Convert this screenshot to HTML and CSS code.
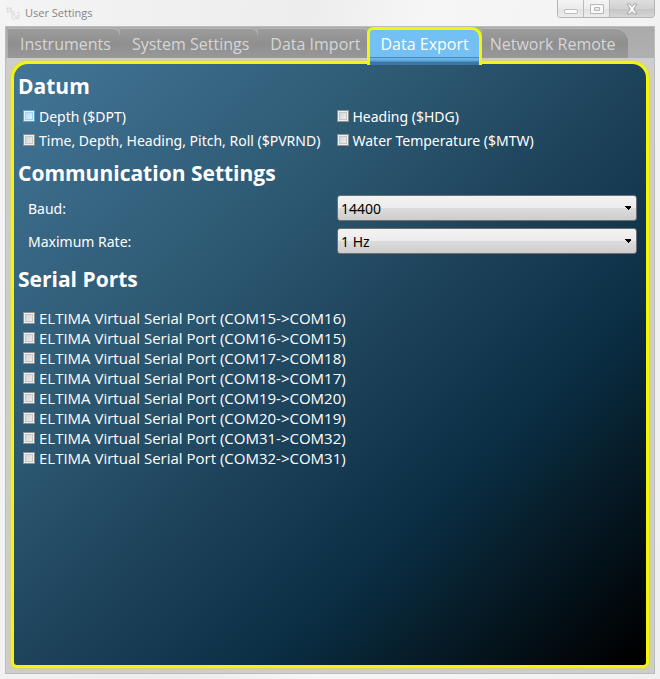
FILE: index.html
```html
<!DOCTYPE html>
<html lang="en">
<head>
<meta charset="utf-8">
<title>User Settings</title>
<link rel="stylesheet" href="styles.css">
</head>
<body>
<div class="window">
  <header class="titlebar">
    <svg class="app-icon" viewBox="0 0 16 16" aria-hidden="true">
      <g fill="none" stroke="#dadada">
        <circle cx="4" cy="4" r="2" stroke-width="2" stroke-dasharray="2 1"/>
        <circle cx="8" cy="7" r="1.5" stroke-width="1"/>
        <circle cx="9" cy="11" r="2" stroke-width="2" stroke-dasharray="1 1"/>
        <path d="M13 6l1 2v3l-2 2" stroke-width="2" stroke-dasharray="2 1"/>
      </g>
    </svg>
    <h1 class="title">User Settings</h1>
    <div class="window-buttons">
      <button class="win-btn" aria-label="Minimize">
        <svg width="14" height="12" viewBox="0 0 14 12"><rect x=".5" y="6.500" width="13" height="4" rx="1.500" fill="#fafafa" stroke="#bdbdbd"/></svg>
      </button>
      <button class="win-btn" aria-label="Maximize">
        <svg width="14" height="12" viewBox="0 0 14 12"><path d="M.5 1.500h13v9H.5zM4.500 4.500h5v3h-5z" fill="#f8f8f8" fill-rule="evenodd" stroke="#b8b8b8"/></svg>
      </button>
      <button class="win-btn close" aria-label="Close">
        <svg width="14" height="12" viewBox="0 0 14 12"><path d="M2 1h3l2 2.500L9 1h3L8.800 6l3.200 5H9L7 8.500 5 11H2l3.200-5z" fill="#fafafa" stroke="#a2a2a2"/></svg>
      </button>
    </div>
  </header>
  <main class="client">
    <div class="tabs" role="tablist">
      <button class="tab" role="tab">Instruments</button>
      <button class="tab" role="tab">System Settings</button>
      <button class="tab" role="tab">Data Import</button>
      <button class="tab active" role="tab" aria-selected="true">Data Export</button>
      <button class="tab last" role="tab">Network Remote</button>
    </div>
    <section class="panel" role="tabpanel">
      <h2>Datum</h2>
      <div class="datum">
        <label class="check"><input type="checkbox" class="hot">Depth ($DPT)</label>
        <label class="check"><input type="checkbox">Heading ($HDG)</label>
        <label class="check"><input type="checkbox">Time, Depth, Heading, Pitch, Roll ($PVRND)</label>
        <label class="check"><input type="checkbox">Water Temperature ($MTW)</label>
      </div>
      <h2>Communication Settings</h2>
      <div class="comm">
        <label for="baud">Baud:</label>
        <select id="baud"><option>14400</option></select>
        <label for="rate">Maximum Rate:</label>
        <select id="rate"><option>1 Hz</option></select>
      </div>
      <h2>Serial Ports</h2>
      <div class="ports">
        <label class="check"><input type="checkbox">ELTIMA Virtual Serial Port (COM15-&gt;COM16)</label>
        <label class="check"><input type="checkbox">ELTIMA Virtual Serial Port (COM16-&gt;COM15)</label>
        <label class="check"><input type="checkbox">ELTIMA Virtual Serial Port (COM17-&gt;COM18)</label>
        <label class="check"><input type="checkbox">ELTIMA Virtual Serial Port (COM18-&gt;COM17)</label>
        <label class="check"><input type="checkbox">ELTIMA Virtual Serial Port (COM19-&gt;COM20)</label>
        <label class="check"><input type="checkbox">ELTIMA Virtual Serial Port (COM20-&gt;COM19)</label>
        <label class="check"><input type="checkbox">ELTIMA Virtual Serial Port (COM31-&gt;COM32)</label>
        <label class="check"><input type="checkbox">ELTIMA Virtual Serial Port (COM32-&gt;COM31)</label>
      </div>
    </section>
  </main>
</div>
</body>
</html>
```
FILE: styles.css
```css
* { box-sizing: border-box; }

body {
  margin: 0;
  font-family: "Noto Sans", "Open Sans", sans-serif;
  font-size: 14px;
  color: #fff;
}

button, select { font: inherit; }

.window {
  display: flex;
  flex-direction: column;
  min-height: 100vh;
  padding: 0 5px 5px;
  background: linear-gradient(100deg, #f4f4f4, #ededed 40%, #f6f6f6 55%, #f0f0f0);
}

.titlebar {
  display: flex;
  align-items: flex-start;
  height: 26px;
}

.app-icon {
  width: 16px;
  height: 16px;
  margin-top: 6px;
}

.title {
  margin: 0 auto 0 4px;
  font-family: "Open Sans", sans-serif;
  font-size: 11px;
  font-weight: 400;
  line-height: 26px;
  color: #858585;
}

.window-buttons {
  display: flex;
  height: 18px;
  border: 1px solid #b4b4b4;
  border-top: 0;
  border-radius: 0 0 4px 4px;
  overflow: hidden;
}

.win-btn {
  display: flex;
  align-items: center;
  justify-content: center;
  width: 26px;
  padding: 0;
  border: 0;
  border-right: 1px solid #bcbcbc;
  background: linear-gradient(#f4f4f4, #ececec 50%, #e2e2e2 51%, #ececec);
}

.win-btn.close {
  width: 44px;
  border-right: 0;
  background: linear-gradient(#dedede, #d2d2d2 50%, #c4c4c4 51%, #d6d6d6);
}

.client {
  display: flex;
  flex-direction: column;
  flex: 1;
  padding: 1px 5px 5px;
  border: 1px solid #bcbcbc;
  background: #cdcdcd;
}

.tabs {
  display: flex;
  align-items: flex-start;
  height: 34px;
  margin: -1px -5px 0;
  padding-left: 2px;
  background: linear-gradient(#aaa, #b0b0b0 31px, #cdcdcd 31px);
}

.tab {
  height: 30px;
  margin-top: 1px;
  padding: 0 9px 0 12px;
  border: 0;
  border-top: 1px solid #b6b6b6;
  border-radius: 2px 8px 0 0;
  background: linear-gradient(#9c9c9c, #8f8f8f 50%, #989898);
  color: #d6d6d6;
  font-family: "Open Sans", sans-serif;
  font-size: 16px;
  line-height: 31px;
  white-space: nowrap;
}

.tab.active {
  z-index: 1;
  height: 38px;
  margin: 0 0 0 -3px;
  padding: 0 10px 7px 11px;
  border: 3px solid #f5f50a;
  border-bottom: 0;
  border-radius: 6px 10px 0 0;
  background: linear-gradient(#72c0f4 27px, #4788b8 27px, #4788b8 28px, #6db9ec 28px, #5ba6dc 31px, #3c78a3 32px, #3c78a3);
  color: #fff;
  line-height: 28px;
}

.tab.last {
  padding: 0 12px 0 8px;
  border-radius: 0 13px 0 0;
}

.panel {
  flex: 1;
  padding: 7px 9px 12px 4px;
  border: 3px solid #f5f50a;
  border-radius: 17px 17px 6px 6px;
  background: linear-gradient(to bottom right, #437697, #2b566f 35%, #1e445c 50%, #0b2f45 69%, #082434 76%, #000 98%);
  background-origin: border-box;
  box-shadow: 0 0 3px #e2e200;
}

h2 {
  margin: 0;
  font-family: "Open Sans", sans-serif;
  font-size: 21px;
  line-height: 30px;
  font-weight: 700;
}

.datum {
  display: grid;
  grid-template-columns: 313fr 300fr;
  margin: 3px 0 6px 5px;
}

.datum .check { height: 24px; }

.check {
  display: flex;
  align-items: center;
  gap: 4px;
  height: 20px;
  white-space: nowrap;
}

.check input {
  appearance: none;
  width: 12px;
  height: 12px;
  margin: 0;
  flex: none;
  border: 1px solid #8e8f8f;
  background: linear-gradient(135deg, #c8cbd0, #f6f6f6);
  box-shadow: inset 0 0 0 1px #f0f0f0, inset 0 0 0 2px #c4c7cc;
}

.check input.hot {
  border-color: #5f9fc8;
  background: linear-gradient(135deg, #a5d5f5, #f0faff);
  box-shadow: inset 0 0 0 1px #def3ff, inset 0 0 0 2px #9bd3f7;
}

.comm {
  display: grid;
  grid-template-columns: 309fr 300fr;
  gap: 7px 0;
  align-items: center;
  margin: 7px 0 10px 10px;
}

select {
  appearance: none;
  width: 100%;
  height: 26px;
  padding: 0 3px;
  border: 1px solid #707070;
  border-radius: 3px;
  background:
    conic-gradient(from -45deg at 50% 100%, #000 90deg, transparent 0) right 5px center / 6px 4px no-repeat,
    linear-gradient(#f3f3f3, #ebebeb 50%, #dcdcdc 51%, #cdcdcd);
  color: #000;
}

.ports {
  margin: 14px 0 0 5px;
  font-family: "Open Sans", sans-serif;
  font-size: 15px;
}
```
